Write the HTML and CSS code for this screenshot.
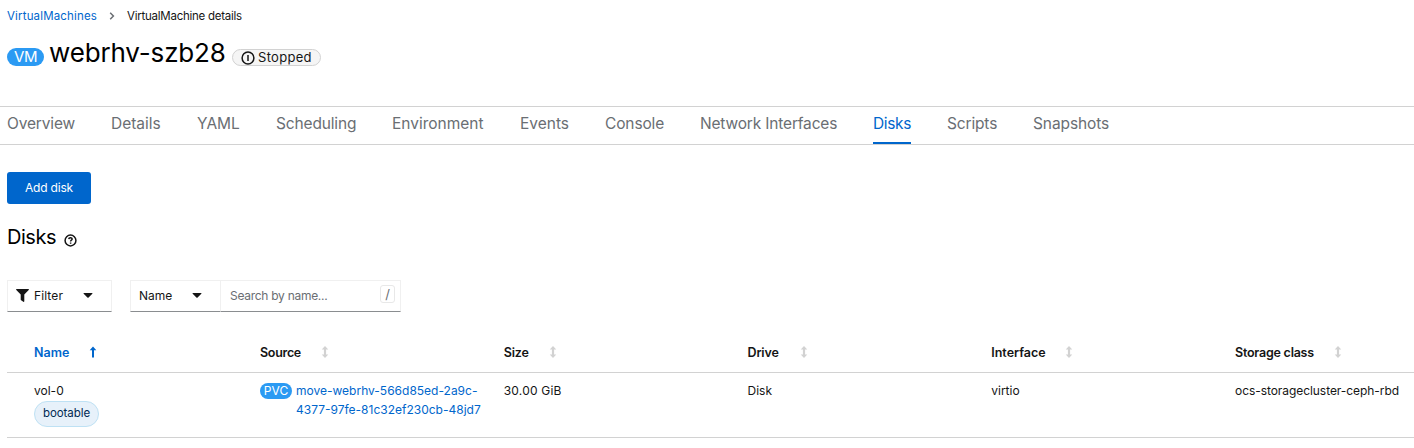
FILE: index.html
```html
<!DOCTYPE html>
<html lang="en">
<head>
<meta charset="utf-8">
<title>VirtualMachine details</title>
<link rel="stylesheet" href="styles.css">
</head>
<body>
<svg width="0" height="0" class="sprite">
  <symbol id="sort" viewBox="0 0 8 12"><path d="M4 0 7.3 3.6H5.1V8.4H7.3L4 12 .7 8.4H2.9V3.6H.7Z"/></symbol>
  <symbol id="caret" viewBox="0 0 10 5"><path d="M.8 0H9.2Q9.8.3 9.3.8L5.6 4.6Q5 5 4.4 4.6L.7.8Q.2.3.8 0Z"/></symbol>
</svg>
<header class="header">
  <nav class="crumbs">
    <a class="crumb-link">VirtualMachines</a>
    <svg class="crumb-sep" viewBox="0 0 6 8"><path d="M1.2.8 4.4 4 1.2 7.2"/></svg>
    <span class="crumb-current">VirtualMachine details</span>
  </nav>
  <div class="title-row">
    <span class="badge badge-vm">VM</span>
    <h1 class="title">webrhv-szb28</h1>
    <span class="status">
      <svg class="status-icon" viewBox="0 0 14 14"><circle cx="7" cy="7" r="5.9"/><path d="M7 4V10"/></svg>
      <span>Stopped</span>
    </span>
  </div>
</header>
<nav class="tabs">
  <a class="tab t-overview">Overview</a>
  <a class="tab t-details">Details</a>
  <a class="tab t-yaml">YAML</a>
  <a class="tab t-scheduling">Scheduling</a>
  <a class="tab t-environment">Environment</a>
  <a class="tab t-events">Events</a>
  <a class="tab t-console">Console</a>
  <a class="tab t-network">Network Interfaces</a>
  <a class="tab t-disks active">Disks</a>
  <a class="tab t-scripts">Scripts</a>
  <a class="tab t-snapshots">Snapshots</a>
</nav>
<main class="main">
  <button class="add">Add disk</button>
  <div class="section-head">
    <h2 class="section-title">Disks</h2>
    <svg class="help" viewBox="0 0 12 12"><circle cx="6" cy="6" r="5"/><path d="M4.4 4.7C4.5 3 7.6 3 7.5 4.8 7.4 5.8 6.1 5.7 6.1 6.9M6.1 7.8V9"/></svg>
  </div>
  <div class="toolbar">
    <div class="control filter">
      <svg class="funnel" viewBox="0 0 13 13"><path d="M.6 0H12.4Q13.3.3 12.7 1.1L8.3 5.6V12.3Q8.1 13.2 7.3 12.8L5.1 11.2Q4.7 10.9 4.7 10.4V5.6L.3 1.1Q-.3.3.6 0Z"/></svg>
      <span class="filter-label">Filter</span>
      <svg class="caret"><use href="#caret"/></svg>
    </div>
    <div class="search-group">
      <div class="control name-select"><span>Name</span><svg class="caret"><use href="#caret"/></svg></div>
      <div class="control search"><span class="placeholder">Search by name...</span><kbd class="key">/</kbd></div>
    </div>
  </div>
  <div class="table">
    <div class="row head">
      <div class="cell sorted"><span>Name</span><svg class="sort-icon up" viewBox="0 0 8 12"><path d="M4 .5 7.3 4.2H5V11.5H3V4.2H.7Z"/></svg></div>
      <div class="cell h-source"><span>Source</span><svg class="sort-icon"><use href="#sort"/></svg></div>
      <div class="cell h-size"><span>Size</span><svg class="sort-icon"><use href="#sort"/></svg></div>
      <div class="cell h-drive"><span>Drive</span><svg class="sort-icon"><use href="#sort"/></svg></div>
      <div class="cell h-interface"><span>Interface</span><svg class="sort-icon"><use href="#sort"/></svg></div>
      <div class="cell h-storage"><span>Storage class</span><svg class="sort-icon"><use href="#sort"/></svg></div>
    </div>
    <div class="row body">
      <div class="cell"><div>vol-0</div><span class="label">bootable</span></div>
      <div class="cell source"><span class="badge badge-pvc">PVC</span><a class="pvc-link">move-webrhv-566d85ed-2a9c-<br>4377-97fe-81c32ef230cb-48jd7</a></div>
      <div class="cell size">30.00 GiB</div>
      <div class="cell">Disk</div>
      <div class="cell">virtio</div>
      <div class="cell storage">ocs-storagecluster-ceph-rbd</div>
    </div>
  </div>
</main>
</body>
</html>
```

FILE: styles.css
```css
* { box-sizing: border-box; }
body { margin: 0; height: 448px; overflow: hidden; background: #fff; color: #151515; font: 400 12px/19px Inter, "Liberation Sans", sans-serif; }
h1, h2 { margin: 0; font-weight: 400; color: #000; }
svg { display: block; flex: none; }
.sprite { position: absolute; }

.header { height: 106px; padding: 6px 7px 0; }
.crumbs { display: flex; align-items: center; height: 20px; font-size: 11.5px; }
.crumb-link { width: 90px; letter-spacing: .16px; color: #06c; }
.crumb-sep { width: 6px; height: 8px; margin: 0 12px; fill: none; stroke: #6a6e73; stroke-width: 1.5; }
.crumb-current { letter-spacing: -.25px; }
.title-row { display: flex; align-items: flex-start; padding-top: 7px; }
.badge { flex: none; display: flex; align-items: center; justify-content: center; background: #2b9af3; color: #fff; border-radius: 20px; }
.badge-vm { width: 37px; height: 18px; margin-top: 15px; padding-bottom: 1px; font-size: 15px; letter-spacing: -.4px; }
.title { width: 177px; margin-left: 5px; font-size: 26px; line-height: 40px; letter-spacing: -.15px; white-space: nowrap; }
.status { display: flex; align-items: center; gap: 3px; width: 89px; height: 17px; margin: 16px 0 0 6px; padding-left: 8px; border: 1px solid #d2d2d2; border-radius: 9px; background: #f5f5f5; font-size: 13px; letter-spacing: .3px; }
.status-icon { width: 14px; height: 14px; fill: none; stroke: #151515; stroke-width: 1.5; }

.tabs { display: flex; gap: 36px; height: 39px; padding-left: 7px; border-top: 1px solid #d2d2d2; border-bottom: 1px solid #d2d2d2; font-size: 15.5px; line-height: 34px; color: #6a6e73; }
.tab { white-space: nowrap; }
.t-overview { width: 68px; letter-spacing: -.15px; }
.t-details { width: 50px; }
.t-yaml { width: 43px; }
.t-scheduling { width: 80px; letter-spacing: -.15px; }
.t-environment { width: 92px; }
.t-events { width: 49px; }
.t-console { width: 59px; letter-spacing: -.13px; }
.t-network { width: 137px; letter-spacing: -.17px; }
.t-disks { width: 38px; letter-spacing: -.36px; }
.t-scripts { width: 50px; letter-spacing: -.15px; }
.t-snapshots { width: 76px; letter-spacing: -.1px; }
.active { color: #06c; border-bottom: 2px solid #06c; }

.main { padding: 27px 0 0 7px; }
.add { display: block; width: 84px; height: 32px; padding: 0 0 1px; border: 0; border-radius: 3px; background: #06c; color: #fff; font: inherit; letter-spacing: -.2px; }
.section-head { display: flex; align-items: center; height: 30px; margin-top: 18px; }
.section-title { width: 57px; font-size: 20px; line-height: 30px; letter-spacing: -.48px; }
.help { width: 13px; height: 13px; margin-top: 6px; fill: none; stroke: #151515; stroke-width: 1.4; }

.toolbar { display: flex; gap: 18px; margin-top: 28px; }
.search-group { display: flex; }
.control { display: flex; align-items: center; height: 32px; padding-bottom: 2px; border: 1px solid #f0f0f0; border-bottom-color: #8a8d90; }
.filter { width: 105px; padding-left: 8px; }
.funnel { width: 13px; height: 13px; fill: #151515; }
.filter-label { width: 49px; margin-left: 5px; letter-spacing: .1px; }
.caret { width: 10px; height: 5px; fill: #151515; }
.name-select { width: 90px; padding-left: 8px; justify-content: space-between; padding-right: 18px; border-right: 0; }
.search { width: 181px; padding: 0 5px 2px 9px; justify-content: space-between; }
.placeholder { color: #6a6e73; letter-spacing: -.28px; }
.key { width: 15px; height: 18px; margin-bottom: 3px; border: 1px solid #e8e8e8; border-radius: 3px; color: #6a6e73; font: 13px/16px Inter, sans-serif; text-align: center; }

.table { margin-top: 20px; }
.row { display: grid; grid-template-columns: 226px 243.75px 243.75px 243.75px 243.75px 1fr; padding-left: 27px; border-bottom: 1px solid #d2d2d2; }
.head { height: 41px; font-size: 12.5px; font-weight: 600; }
.head .cell { display: flex; align-items: center; }
.head span { white-space: nowrap; }
.sorted { color: #06c; }
.sorted span { width: 55px; }
.h-source span { width: 61px; letter-spacing: -.3px; }
.h-size span { width: 45px; letter-spacing: -.15px; }
.h-drive span { width: 52px; letter-spacing: -.15px; }
.h-interface span { width: 74px; }
.h-storage span { width: 99px; letter-spacing: -.23px; }
.sort-icon { width: 8px; height: 12px; fill: #d2d2d2; }
.up { fill: #06c; }
.body { height: 65px; padding-top: 8px; }
.label { display: inline-flex; align-items: center; height: 26px; margin-top: 1px; padding: 0 8px 1px; border: 1px solid #bee1f4; border-radius: 14px; background: #e7f1fa; color: #002952; font-size: 11.5px; letter-spacing: -.08px; vertical-align: top; }
.source { display: flex; gap: 4px; color: #06c; white-space: nowrap; }
.badge-pvc { width: 32px; height: 16px; margin-top: 2px; padding-bottom: 1px; }
.size { letter-spacing: .2px; }
.storage { letter-spacing: -.06px; white-space: nowrap; }
```
